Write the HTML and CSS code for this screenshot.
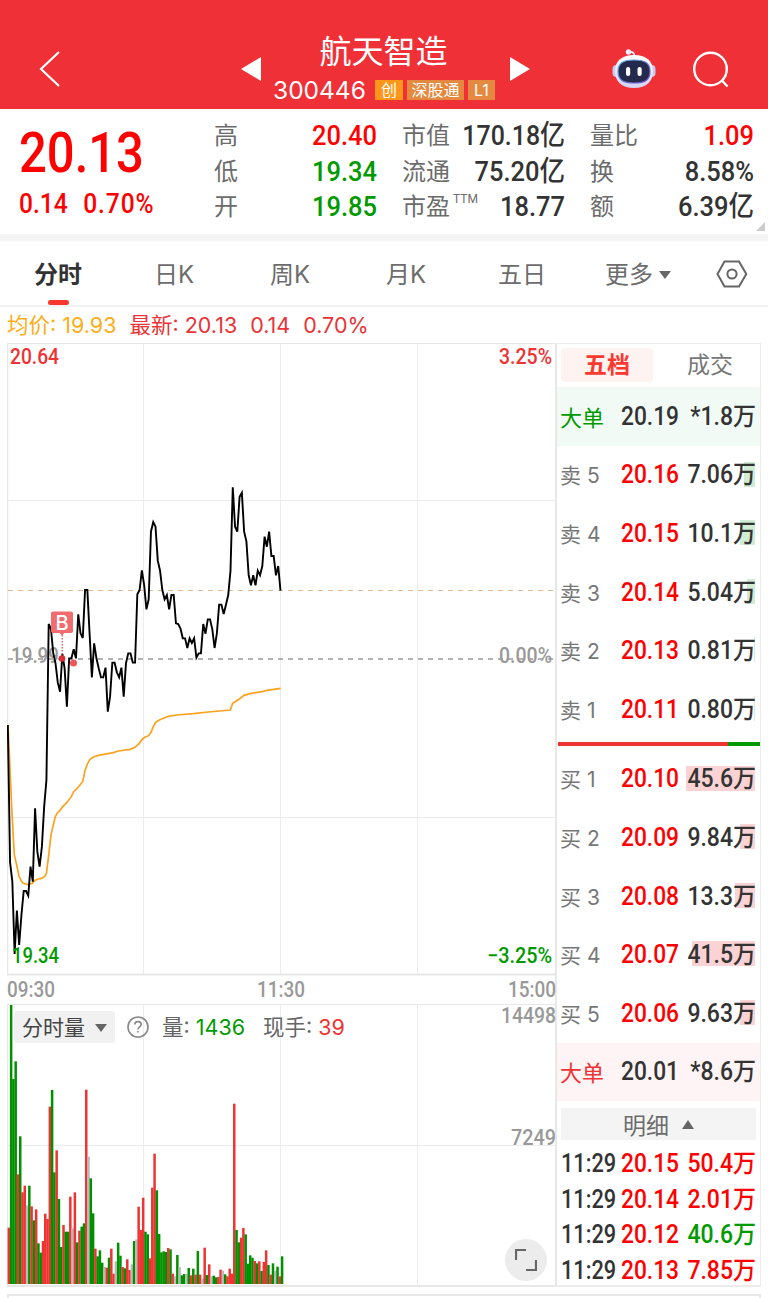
FILE: index.html
```html
<!DOCTYPE html>
<html lang="zh-CN">
<head>
    <meta charset="UTF-8">
    <meta name="viewport" content="width=device-width, initial-scale=1.0">
    <title>航天智造 300446</title>
    <link rel="stylesheet" href="styles.css">
</head>
<body>
    <header class="header">
        <svg class="back" width="22" height="38" viewBox="0 0 22 38"><path d="M20 2 2 19l18 17"/></svg>
        <svg class="arrow prev" width="20" height="24" viewBox="0 0 20 24"><path d="M20 0v24L0 12z"/></svg>
        <div class="stock">
            <h1 class="stock-name">航天智造</h1>
            <div class="stock-meta">
                <span class="stock-code">300446</span>
                <span class="tag tag-main">创</span>
                <span class="tag">深股通</span>
                <span class="tag tag-level">L1</span>
            </div>
        </div>
        <svg class="arrow next" width="20" height="24" viewBox="0 0 20 24"><path d="M0 0v24l20-12z"/></svg>
        <svg class="robot" width="44" height="42" viewBox="0 0 44 42">
            <defs>
                <linearGradient id="shell" x1="0" y1="0" x2="0" y2="1">
                    <stop offset="0" stop-color="#fff"/>
                    <stop offset="1" stop-color="#d3d2f3"/>
                </linearGradient>
                <linearGradient id="rim" x1="0" y1="0" x2="1" y2="1">
                    <stop offset="0" stop-color="#5bb6ea"/>
                    <stop offset="1" stop-color="#7446c8"/>
                </linearGradient>
            </defs>
            <path d="M17 3Q22 2 22.500 7" fill="none" stroke="#f1edfa" stroke-width="1.800"/>
            <circle cx="16.500" cy="3" r="2.700" fill="#f5efff"/>
            <rect x=".5" y="16" width="8" height="12" rx="4" fill="#c9cbee"/>
            <rect x="35.500" y="16" width="8" height="12" rx="4" fill="#c9cbee"/>
            <path d="M22 6C34 6 41 12 41 22s-6 17-19 17S3 32 3 22 10 6 22 6z" fill="url(#shell)"/>
            <path d="M22 11c11 0 16 3 16 11.500S33 34 22 34 6 31 6 22.500 11 11 22 11z" fill="#232a4b" stroke="url(#rim)" stroke-width="1.200"/>
            <rect x="14" y="18" width="4.200" height="9" rx="2.100" fill="#fff"/>
            <rect x="25.500" y="18" width="4.200" height="9" rx="2.100" fill="#fff"/>
        </svg>
        <svg class="search" width="38" height="38" viewBox="0 0 38 38"><circle cx="18.500" cy="18" r="16.300"/><path d="m29.500 29 6 6.500"/></svg>
    </header>

    <section class="quote">
        <div class="price">
            <div class="price-now">20.13</div>
            <div class="price-change"><span>0.14</span><span class="percent">0.70%</span></div>
        </div>
        <dl class="facts">
            <dt>高</dt><dd class="up">20.40</dd>
            <dt>市值</dt><dd class="long">170.18亿</dd>
            <dt>量比</dt><dd class="up">1.09</dd>
            <dt>低</dt><dd class="down">19.34</dd>
            <dt>流通</dt><dd>75.20亿</dd>
            <dt>换</dt><dd>8.58%</dd>
            <dt>开</dt><dd class="down">19.85</dd>
            <dt>市盈<sup>TTM</sup></dt><dd>18.77</dd>
            <dt>额</dt><dd>6.39亿</dd>
        </dl>
        <span class="corner"></span>
    </section>

    <nav class="tabs">
        <a class="tab active">分时</a>
        <a class="tab">日K</a>
        <a class="tab">周K</a>
        <a class="tab">月K</a>
        <a class="tab">五日</a>
        <a class="tab more">更多<i class="caret"></i></a>
        <svg class="settings" width="32" height="28" viewBox="0 0 32 28"><path d="M8.500 1.500h14.500L30.300 14 23 26.500H8.500L1.500 14z"/><circle cx="16" cy="14" r="4.600"/></svg>
    </nav>

    <div class="legend">
        <span class="avg">均价: 19.93</span>
        <span>最新: 20.13</span>
        <span>0.14</span>
        <span>0.70%</span>
    </div>

    <main class="board">
        <div class="chart">
            <svg id="chart" width="550" height="944" viewBox="7 343 550 944">
                <g class="grid">
                    <path d="M143.500 344v630M280.500 344v630M417.500 344v630M8 500.500h548M8 817.500h548"/>
                    <path d="M143.500 1005v280M280.500 1005v280M417.500 1005v280M8 1145.500h548"/>
                </g>
                <g class="frame">
                    <path d="M7.500 343v632M7.500 1004v283" stroke-width="1.500"/>
                    <path d="M7 343.500h549M7 1004.500h549"/>
                    <path d="M7 974.500h549M7 1286h549" stroke-width="2"/>
                    <path d="M556 343v944" stroke-width="2"/>
                </g>
                <g class="label muted">
                    <text x="11" y="663" textLength="48" lengthAdjust="spacingAndGlyphs">19.99</text>
                    <text x="499" y="663" textLength="53" lengthAdjust="spacingAndGlyphs">0.00%</text>
                    <text x="7" y="997" textLength="48" lengthAdjust="spacingAndGlyphs">09:30</text>
                    <text x="257" y="997" textLength="48" lengthAdjust="spacingAndGlyphs">11:30</text>
                    <text x="508" y="997" textLength="48" lengthAdjust="spacingAndGlyphs">15:00</text>
                    <text x="501" y="1023" textLength="55" lengthAdjust="spacingAndGlyphs">14498</text>
                    <text x="511" y="1145" textLength="45" lengthAdjust="spacingAndGlyphs">7249</text>
                </g>
                <path class="last-line" d="M8 590.500h547"/>
                <path class="base-line" d="M8 659h547"/>
                <g id="volume"></g>
                <polyline id="avg-line" points=""/>
                <polyline id="price-line" points=""/>
                <g class="label">
                    <text class="red" x="10" y="363.500" textLength="49" lengthAdjust="spacingAndGlyphs">20.64</text>
                    <text class="red" x="499" y="363.500" textLength="53" lengthAdjust="spacingAndGlyphs">3.25%</text>
                    <text class="green" x="12" y="962.500" textLength="47" lengthAdjust="spacingAndGlyphs">19.34</text>
                    <text class="green" x="487" y="962.500" textLength="65" lengthAdjust="spacingAndGlyphs">−3.25%</text>
                </g>
                <g class="marker">
                    <path d="M62.200 635v20" stroke="#f23b45" stroke-width="1.200" stroke-dasharray="1.500 1.500"/>
                    <path d="M53 611.500h18a2 2 0 0 1 2 2V631a2 2 0 0 1-2 2h-6.500L62 635.500 59.500 633H53a2 2 0 0 1-2-2v-17.500a2 2 0 0 1 2-2z" fill="#f06c6e"/>
                    <text x="62" y="629.500" text-anchor="middle">B</text>
                    <circle cx="62" cy="658.500" r="3.300" fill="#dd3036"/>
                    <circle cx="73.500" cy="663" r="3.500" fill="#ef575c"/>
                </g>
            </svg>
            <div class="volume-bar">
                <button class="picker">分时量<i class="caret"></i></button>
                <svg class="help" width="22" height="22" viewBox="0 0 22 22"><circle cx="11" cy="11" r="10"/><path d="M7.800 8.600c0-4 6.400-4 6.400 0 0 2.300-3.200 2.500-3.200 4.900M11 15v1.600"/></svg>
                <span class="volume-item">量: <b class="green">1436</b></span>
                <span class="volume-item">现手: <b class="red">39</b></span>
            </div>
            <button class="expand"><svg width="22" height="22" viewBox="0 0 22 22"><path d="M1 11V1h10M21 11v10H11"/></svg></button>
        </div>

        <aside class="book">
            <div class="book-tabs">
                <span class="book-tab active">五档</span>
                <span class="book-tab">成交</span>
            </div>
            <div class="row big sell"><span class="side">大单</span><span class="num">20.19</span><span class="num vol">*1.8万</span></div>
            <div id="sells"></div>
            <div class="ratio"><span></span></div>
            <div id="buys"></div>
            <div class="row big buy"><span class="side">大单</span><span class="num">20.01</span><span class="num vol">*8.6万</span></div>
            <div class="detail-head">明细<i class="caret upward"></i></div>
            <div class="deals">
                <div class="deal"><span class="num time">11:29</span><span class="num up">20.15</span><span class="num vol up">50.4万</span></div>
                <div class="deal"><span class="num time">11:29</span><span class="num up">20.14</span><span class="num vol up">2.01万</span></div>
                <div class="deal"><span class="num time">11:29</span><span class="num up">20.12</span><span class="num vol down">40.6万</span></div>
                <div class="deal"><span class="num time">11:29</span><span class="num up">20.13</span><span class="num vol up">7.85万</span></div>
            </div>
        </aside>
    </main>
    <div class="next-panel"></div>

    <script src="chart.js"></script>
</body>
</html>
```
FILE: styles.css
```css
* {
    margin: 0;
    padding: 0;
    box-sizing: border-box;
}

body {
    width: 768px;
    height: 1298px;
    overflow: hidden;
    background-color: #fff;
    color: #333;
    font-family: Inter, 'Noto Sans CJK SC', sans-serif;
}

svg {
    display: block;
    flex: none;
}

button {
    border: 0;
    font: inherit;
    color: inherit;
}

.up {
    color: #f00;
}

.down {
    color: #009a00;
}

.red {
    color: #ee3333;
    fill: #ee3333;
}

.green {
    color: #009a00;
    fill: #009a00;
}

.caret {
    display: inline-block;
    border: 6px solid transparent;
    border-top: 8px solid #666;
    border-bottom: 0;
}

.caret.upward {
    border-top: 0;
    border-bottom: 9px solid #666;
}

/* header */
.header {
    display: flex;
    height: 109px;
    padding-top: 32px;
    background-color: #f03037;
    color: #fff;
}

.back {
    margin: 18px 0 0 39px;
    fill: none;
    stroke: #fff;
    stroke-width: 2.2;
}

.arrow {
    margin-top: 25px;
    fill: #fff;
}

.prev {
    margin-left: 180px;
}

.stock {
    width: 249px;
    text-align: center;
}

.stock-name {
    height: 39px;
    padding-right: 4px;
    font-size: 32px;
    font-weight: 400;
    line-height: 39px;
    text-align: center;
}

.stock-meta {
    display: flex;
    align-items: center;
    gap: 4px;
    margin-left: 12px;
    height: 38px;
}

.stock-code {
    width: 98px;
    font-size: 24.5px;
    text-align: left;
}

.tag {
    height: 20px;
    padding: 0 4.5px;
    background-color: #e4893f;
    font-size: 16px;
    line-height: 20px;
    white-space: nowrap;
}

.tag-main {
    padding: 0 6px;
    background-color: #ff961a;
}

.tag-level {
    padding: 0 6px;
}

.robot {
    margin: 17px 0 0 82px;
}

.search {
    margin: 19px 0 0 36px;
    fill: none;
    stroke: #fff;
    stroke-width: 2.4;
}

/* quote */
.quote {
    position: relative;
    display: flex;
    height: 132px;
    border-bottom: 7px solid #f4f4f4;
    font-family: Roboto, 'Noto Sans CJK SC', sans-serif;
    font-weight: 500;
}

.price {
    width: 214px;
    padding: 12px 0 0 19px;
    color: #f00;
}

.price-now {
    height: 64px;
    font-size: 55px;
    line-height: 64px;
    transform: scaleX(.89);
    transform-origin: left;
}

.price-change {
    display: flex;
    gap: 17px;
    padding-top: 4px;
    font-size: 27px;
    line-height: 31px;
    transform: scaleX(.91);
    transform-origin: left;
}

.percent {
    letter-spacing: 1px;
}

.facts {
    display: grid;
    grid-template-columns: 72px 91px 100px 88px 100px 89px;
    grid-template-rows: repeat(3, 35.500px);
    padding-top: 9px;
}

.facts dt:nth-of-type(3n+2),
.facts dt:nth-of-type(3n) {
    margin-left: 25px;
}

.facts dt {
    color: #6c6c6c;
    font-size: 24px;
    font-weight: 400;
    line-height: 37px;
    white-space: nowrap;
}

.facts dd {
    display: flex;
    justify-content: flex-end;
    font-size: 28px;
    line-height: 36px;
    white-space: nowrap;
    transform: scaleX(.91);
    transform-origin: right;
}

.facts .long {
    transform: scaleX(.89);
}

.facts sup {
    margin-left: 3px;
    font-size: 12px;
    line-height: 0;
    vertical-align: 12px;
}

.corner {
    position: absolute;
    right: 3px;
    bottom: 3px;
    border-left: 9px solid transparent;
    border-bottom: 9px solid #ccc;
}

/* period tabs */
.tabs {
    display: flex;
    height: 66px;
    border-bottom: 2px solid #f1f1f1;
    color: #6c6c6c;
    font-size: 24px;
    font-weight: 400;
    line-height: 67px;
}

.tab {
    position: relative;
    width: 116px;
    height: 64px;
    text-align: center;
}

.tab.active {
    color: #333;
    font-weight: 700;
}

.tab.active::after {
    content: "";
    position: absolute;
    left: 48px;
    bottom: 0;
    width: 21px;
    height: 5px;
    border-radius: 3px;
    background-color: #fa372d;
}

.more .caret {
    margin-left: 6px;
    vertical-align: 4px;
}

.settings {
    margin: 19px 0 0 20px;
    fill: none;
    stroke: #666;
    stroke-width: 2;
}

/* chart */
.legend {
    display: flex;
    gap: 13px;
    height: 36px;
    padding-left: 7px;
    color: #e93437;
    font-size: 21.5px;
    line-height: 36px;
}

.legend .avg {
    color: #fbae17;
}

.board {
    display: flex;
    height: 944px;
    padding-left: 7px;
}

.chart {
    position: relative;
    width: 550px;
}

.grid path {
    stroke: #ececec;
}

.frame path {
    stroke: #e8e8e8;
}

.label text {
    font: 500 21.500px Roboto, sans-serif;
}

.label.muted text {
    fill: #999;
}

.last-line {
    stroke: #dfb98c;
    stroke-dasharray: 5 5;
}

.base-line {
    stroke: #999;
    stroke-width: 1.5;
    stroke-dasharray: 5 5;
}

#price-line {
    fill: none;
    stroke: #000;
    stroke-width: 1.9;
}

#avg-line {
    fill: none;
    stroke: #fda21f;
    stroke-width: 1.7;
}

.marker text {
    fill: #fff;
    font: 500 20px Inter, sans-serif;
}

.volume-bar {
    position: absolute;
    left: 7px;
    top: 668px;
    display: flex;
    align-items: center;
    color: #666;
    font-size: 21.5px;
}

.picker {
    width: 101px;
    height: 32px;
    border-radius: 3px;
    background-color: #f1f1f1;
    color: #444;
    font-size: 21px;
    line-height: 33px;
}

.picker .caret {
    margin-left: 10px;
    vertical-align: 3px;
}

.help {
    margin: 0 13px 0 12px;
    fill: none;
    stroke: #888;
    stroke-width: 1.6;
}

.volume-item {
    margin-right: 18px;
    line-height: 32px;
    white-space: nowrap;
}

.volume-item b {
    font-weight: 400;
}

.expand {
    position: absolute;
    left: 498px;
    top: 896px;
    width: 42px;
    height: 42px;
    padding: 10px;
    border-radius: 50%;
    background-color: #ececec;
}

.expand path {
    fill: none;
    stroke: #666;
    stroke-width: 2.2;
}

/* order book */
.book {
    width: 204px;
    border: solid #ececec;
    border-width: 1px 1px 2px 0;
}

.book-tabs {
    display: flex;
    height: 43px;
    padding: 4px 0 0 4px;
}

.book-tab {
    flex: none;
    width: 92px;
    height: 34px;
    margin-right: 11px;
    border-radius: 4px;
    color: #777;
    font-size: 23px;
    line-height: 34px;
    text-align: center;
}

.book-tab.active {
    background-color: #fff3f2;
    color: #fb392f;
    font-weight: 700;
}

.num {
    font-family: Roboto, 'Noto Sans CJK SC', sans-serif;
    font-size: 25px;
    font-weight: 500;
    line-height: 38px;
    white-space: nowrap;
    transform: scaleX(.91);
    transform-origin: left;
}

.row {
    position: relative;
    display: grid;
    grid-template-columns: 60px 64px minmax(0, 1fr);
    align-items: center;
    height: 58.600px;
    padding: 1px 4px 0;
}

.side {
    margin-left: -1px;
    padding-bottom: 2px;
    color: #777;
    font-size: 21px;
    white-space: pre;
}

.vol {
    display: flex;
    justify-content: flex-end;
    transform: scaleX(.92);
    transform-origin: right;
}

.big .side {
    font-size: 22px;
}

.big.sell {
    background-color: #f2faf6;
}

.big.sell .side {
    color: #009a00;
}

.big.buy {
    background-color: #fff4f5;
}

.big.buy .side {
    color: #ee3333;
}

/* quantity bar drawn behind the last column */
.depth {
    position: absolute;
    right: 5px;
    top: 16px;
    height: 25px;
    background-color: #fbd3d5;
}

.depth.green-bg {
    background-color: #d0ecd2;
}

.ratio {
    height: 4px;
    margin: 3px 0 4px 1px;
    background-color: #009a00;
}

.ratio span {
    display: block;
    width: 84%;
    height: 4px;
    background-color: #ee3333;
}

.detail-head {
    display: flex;
    align-items: center;
    justify-content: center;
    gap: 13px;
    height: 32px;
    margin: 7px 4px 5px;
    background-color: #f4f4f4;
    color: #6c6c6c;
    font-size: 23px;
}

.deal {
    display: grid;
    grid-template-columns: 60px 64px minmax(0, 1fr);
    height: 35.600px;
    padding: 0 4px;
}

.time {
    transform: scaleX(.87);
}

.next-panel {
    height: 8px;
    margin: 7px 7px 0;
    border: 2px solid #e8e8e8;
    border-bottom: 0;
}
```
FILE: chart.js
```javascript
const NS = 'http://www.w3.org/2000/svg';
const STEP = 2.277; // one minute on the x axis

// minute closes and volumes, in thirds of a pixel
const closes = [
    735, 1147, 1205, 1422, 1292, 1395, 1305, 1233, 1233, 1247, 1160, 1205, 985, 1115, 1160,
    1100, 980, 900, 432, 447, 520, 550, 608, 635, 522, 565, 680, 535, 535, 508,
    535, 403, 460, 474, 330, 330, 462, 592, 490, 535, 565, 592, 592, 563, 695,
    650, 548, 548, 577, 592, 563, 650, 550, 520, 520, 548, 548, 343, 330, 271,
    315, 388, 358, 155, 126, 140, 242, 272, 330, 358, 345, 388, 345, 345, 430,
    432, 446, 475, 475, 504, 475, 489, 475, 533, 520, 520, 432, 461, 418, 418,
    448, 504, 460, 374, 374, 402, 374, 345, 272, 22, 140, 155, 50, 38, 155,
    184, 286, 316, 286, 316, 272, 286, 258, 170, 200, 155, 228, 228, 286, 258, 332
];

const average = [
    [24, 735], [35, 980], [43, 1125], [50, 1155], [57, 1188], [64, 1203], [70, 1210], [84, 1214],
    [97, 1210], [105, 1201], [115, 1197], [125, 1195], [133, 1190], [139, 1181], [145, 1135],
    [153, 1065], [160, 1035], [166, 1010], [173, 998], [180, 991], [188, 980], [200, 968],
    [214, 950], [221, 935], [230, 927], [248, 905], [255, 872], [262, 852], [270, 838], [280, 831],
    [295, 826], [340, 818], [355, 813], [390, 808], [405, 802], [418, 790], [428, 776], [436, 771],
    [446, 767], [453, 757], [460, 740], [467, 727], [478, 720], [505, 709], [530, 705], [580, 701],
    [625, 696], [691, 690], [698, 670], [718, 657], [732, 646], [750, 641], [790, 634], [800, 631], [842, 625]
];

// r: up, g: down, n: unchanged
const volumes = `r169 g837 g615 g668 r329 g443 r275 r295 n236 g295 r233 g191 r224 g122 g94
    r129 r211 r195 r532 g582 g335 r401 g255 g111 r177 g157 g157 r262 n167 r275
    g125 r160 g172 g182 r583 n382 g317 g212 r106 g83 g101 g64 n51 r49 g79
    r106 r31 n68 g124 g85 r51 g47 r74 r42 n59 g129 n134 r232 r162 r259
    g157 g149 r77 r289 r391 g281 g150 g95 g98 g96 r108 g104 r31 n23 g87
    n51 g26 g30 n30 g48 r26 g46 r28 g99 r28 n17 r109 g27 r59 n23
    g25 g20 r21 r43 n40 g29 r23 r46 r31 r541 g162 g125 r139 r168 g149
    g61 g86 g79 r69 g62 r68 g39 r66 r101 g57 r28 g62 n40 g52 r23 g83`.split(/\s+/);

const colors = { r: '#ee3333', g: '#009000', n: '#bbbbbb' };

document.getElementById('price-line').setAttribute('points',
    closes.map((y, i) => `${(7.8 + i * STEP * 0.998).toFixed(2)},${(480 + y / 3).toFixed(2)}`).join(' '));

document.getElementById('avg-line').setAttribute('points',
    average.map(([x, y]) => `${(x / 3).toFixed(2)},${(480 + y / 3).toFixed(2)}`).join(' '));

volumes.forEach((item, i) => {
    const height = Number(item.slice(1)) / 3;
    const bar = document.createElementNS(NS, 'rect');
    bar.setAttribute('x', (7.6 + i * STEP).toFixed(2));
    bar.setAttribute('y', (1284 - height).toFixed(2));
    bar.setAttribute('width', 2.5);
    bar.setAttribute('height', height.toFixed(2));
    bar.setAttribute('fill', colors[item[0]]);
    document.getElementById('volume').appendChild(bar);
});

const sells = [['5', '20.16', '7.06'], ['4', '20.15', '10.1'], ['3', '20.14', '5.04'], ['2', '20.13', '0.81'], ['1', '20.11', '0.80']];
const buys = [['1', '20.10', '45.6'], ['2', '20.09', '9.84'], ['3', '20.08', '13.3'], ['4', '20.07', '41.5'], ['5', '20.06', '9.63']];

function renderRows(id, name, rows, depthClass) {
    document.getElementById(id).innerHTML = rows.map(([level, price, amount]) => `
        <div class="row">
            <i class="depth ${depthClass}" style="width: ${Math.round(amount * 1.51)}px"></i>
            <span class="side">${name} ${level}</span>
            <span class="num up">${price}</span>
            <span class="num vol">${amount}万</span>
        </div>`).join('');
}

renderRows('sells', '卖', sells, 'green-bg');
renderRows('buys', '买', buys, '');
```
